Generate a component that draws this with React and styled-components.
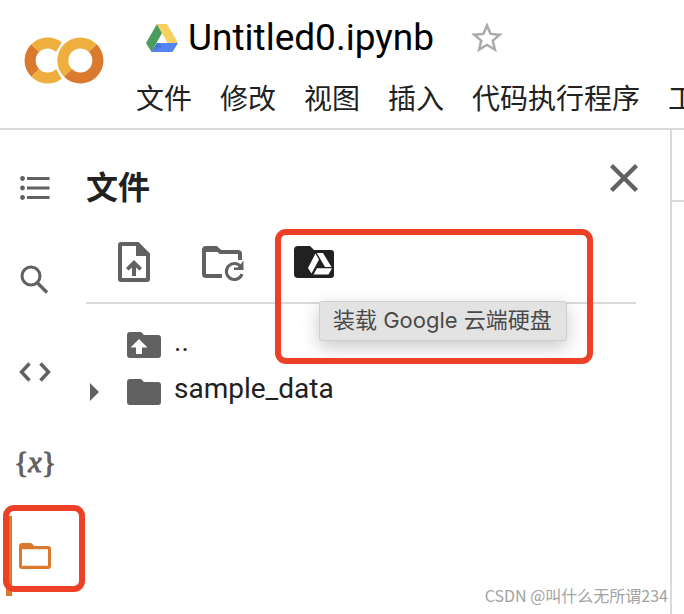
import styled, { createGlobalStyle } from "styled-components";

const colors = {
  text: "#212121",
  icon: "#616161",
  border: "#dadada",
  orange: "#d97a2f",
  yellow: "#eeaf3f",
  mark: "#ee4027",
};

const menuItems = ["文件", "修改", "视图", "插入", "代码执行程序", "工具"];

const ColabLogo = () => (
  <svg width="80" height="47" viewBox="0 5 24 14" aria-hidden="true">
    <path
      fill={colors.orange}
      d="M4.54 9.46 2.19 7.1a6.93 6.93 0 0 0 0 9.79l2.36-2.36a3.59 3.59 0 0 1-.01-5.07Z"
    />
    <path
      fill={colors.yellow}
      d="M2.19 7.1l2.35 2.36a3.59 3.59 0 0 1 5.08 0l1.71-2.93-.1-.08A6.93 6.93 0 0 0 2.19 7.1Z"
    />
    <path
      fill={colors.yellow}
      d="M11.34 17.46 9.62 14.54a3.59 3.59 0 0 1-5.08 0L2.19 16.9a6.93 6.93 0 0 0 9 .65l.15-.09Z"
    />
    <path
      fill={colors.yellow}
      d="M12 7.1a6.93 6.93 0 0 0 0 9.79l2.36-2.36a3.59 3.59 0 1 1 5.08-5.08L21.81 7.1A6.93 6.93 0 0 0 12 7.1Z"
    />
    <path
      fill={colors.orange}
      d="M21.81 7.1 19.46 9.46a3.59 3.59 0 0 1-5.08 5.08L12 16.9A6.93 6.93 0 0 0 21.81 7.1Z"
    />
  </svg>
);

const DriveLogo = () => (
  <svg width="32" height="28" viewBox="0 0 32 28" aria-hidden="true">
    <path fill="#4a9c5f" d="M11 0 16 9 5.5 28 0 19Z" />
    <path fill="#f7d060" d="M11 0h10l11 19H21.5Z" />
    <path fill="#5484ef" d="M11 19h21l-5.5 9h-21Z" />
    <path fill="#4a74d8" d="M11 19 5.5 28 16.5 22Z" />
  </svg>
);

const StarIcon = () => (
  <svg width="38" height="38" viewBox="0 0 24 24" fill="#ababab" aria-hidden="true">
    <path d="M22 9.24l-7.19-.62L12 2 9.19 8.63 2 9.24l5.46 4.73L5.82 21 12 17.27 18.18 21l-1.63-7.03L22 9.24zM12 15.4l-3.76 2.27 1-4.28-3.32-2.88 4.38-.38L12 6.1l1.71 4.04 4.38.38-3.32 2.88 1 4.28L12 15.4z" />
  </svg>
);

const TocIcon = () => (
  <svg width="40" height="40" viewBox="0 0 40 40" fill="currentColor" aria-hidden="true">
    <circle cx="7.5" cy="10.5" r="2.4" />
    <circle cx="7.5" cy="20" r="2.4" />
    <circle cx="7.5" cy="29.5" r="2.4" />
    <path d="M12 9h22.5v3H12zM12 18.5h22.5v3H12zM12 28h22.5v3H12z" />
  </svg>
);

const SearchIcon = () => (
  <svg
    width="40"
    height="40"
    viewBox="0 0 40 40"
    fill="none"
    stroke="currentColor"
    strokeWidth="3"
    aria-hidden="true"
  >
    <circle cx="16" cy="16" r="9" />
    <path d="M22.5 23 32 32.5" strokeWidth="3.4" />
  </svg>
);

const CodeIcon = () => (
  <svg
    width="40"
    height="40"
    viewBox="0 0 40 40"
    fill="none"
    stroke="currentColor"
    strokeWidth="3.4"
    aria-hidden="true"
  >
    <path d="M14.5 11.5 6.5 20l8 8.5M25.5 11.5l8 8.500-8 8.500" />
  </svg>
);

const FolderOutlineIcon = () => (
  <svg width="40" height="40" viewBox="0 0 40 40" fill="currentColor" aria-hidden="true">
    <path
      fillRule="evenodd"
      d="M6.5 7H16l3.5 3H33a3 3 0 0 1 3 3v17a3 3 0 0 1-3 3H7a3 3 0 0 1-3-3V10a3 3 0 0 1 2.5-3ZM7 13.2V29.8h26V13.2Z"
    />
  </svg>
);

const CloseIcon = () => (
  <svg
    width="48"
    height="48"
    viewBox="0 0 48 48"
    fill="none"
    stroke="currentColor"
    strokeWidth="4.4"
    aria-hidden="true"
  >
    <path d="M11.5 11.5 36.5 36.5M36.5 11.5 11.5 36.5" />
  </svg>
);

const UploadIcon = () => (
  <svg width="48" height="48" viewBox="0 0 48 48" fill="currentColor" aria-hidden="true">
    <path
      fillRule="evenodd"
      d="M11 4h17.5L40 15.5V41a3 3 0 0 1-3 3H11a3 3 0 0 1-3-3V7a3 3 0 0 1 3-3Zm1 4v32h24V18H26V8Z"
    />
    <path d="M24 22 32 30l-2.5 2.5L26 29.5V38h-4v-8.5l-3.5 3L16 30Z" />
  </svg>
);

const RefreshFolderIcon = () => (
  <svg width="48" height="48" viewBox="0 0 48 48" fill="none" stroke="currentColor" aria-hidden="true">
    <path d="M22 38H6a2 2 0 0 1-2-2V12a2 2 0 0 1 2-2h10l4.5 4H38a2 2 0 0 1 2 2v6" strokeWidth="4" />
    <path d="M5 9h11.5l5 5H4Z" fill="currentColor" stroke="none" />
    <path d="M41 29a8 8 0 1 0 1 7" strokeWidth="3" />
    <path d="M43.5 22.5V32H34v-2.5h3.500l3-3Z" fill="currentColor" stroke="none" />
  </svg>
);

const DriveFolderIcon = () => (
  <svg width="48" height="48" viewBox="0 0 48 48" aria-hidden="true">
    <path
      fill="currentColor"
      d="M8 8h12l4 4h17a3 3 0 0 1 3 3v22a3 3 0 0 1-3 3H8a4 4 0 0 1-4-4V12a4 4 0 0 1 4-4Z"
    />
    <path
      fill="#fff"
      d="M25.5 15.5 29 21.5 21.5 35.5 18 30ZM26.800 15h6.2L41.5 29h-6.500ZM27 30.200h15L38.500 36.500H23.500Z"
    />
  </svg>
);

const FolderIcon = ({ up }) => (
  <svg width="34" height="28" viewBox="0 0 34 28" aria-hidden="true">
    <path
      fill={colors.icon}
      d="M3 1h11l3 3h14a3 3 0 0 1 3 3v17a3 3 0 0 1-3 3H3a3 3 0 0 1-3-3V4a3 3 0 0 1 3-3Z"
    />
    {up && <path fill="#fff" d="M12 8l8.5 8.5H15V23H9v-6.5H3.5Z" />}
  </svg>
);

const Triangle = () => (
  <svg width="9" height="18" viewBox="0 0 9 18" fill={colors.icon} aria-hidden="true">
    <path d="M0 0 9 9 0 18Z" />
  </svg>
);

export default function App() {
  return (
    <>
      <GlobalStyle />
      <Page>
        <Header>
          <Logo href="#" aria-label="Colab">
            <ColabLogo />
          </Logo>
          <HeaderMain>
            <TitleRow>
              <DriveLogo />
              <Title>Untitled0.ipynb</Title>
              <IconButton aria-label="加星标">
                <StarIcon />
              </IconButton>
            </TitleRow>
            <Menu>
              {menuItems.map((item) => (
                <MenuButton key={item}>{item}</MenuButton>
              ))}
            </Menu>
          </HeaderMain>
        </Header>

        <Body>
          <Rail>
            <RailButton aria-label="目录">
              <TocIcon />
            </RailButton>
            <RailButton aria-label="查找和替换">
              <SearchIcon />
            </RailButton>
            <RailButton aria-label="代码段">
              <CodeIcon />
            </RailButton>
            <RailButton aria-label="变量">
              <Variable>
                {"{"}
                <i>x</i>
                {"}"}
              </Variable>
            </RailButton>
            <RailButton $active aria-label="文件">
              <FolderOutlineIcon />
              <RailMark />
            </RailButton>
          </Rail>

          <Panel>
            <PanelHeader>
              <PanelTitle>文件</PanelTitle>
              <IconButton aria-label="关闭">
                <CloseIcon />
              </IconButton>
            </PanelHeader>
            <Toolbar>
              <IconButton aria-label="上传">
                <UploadIcon />
              </IconButton>
              <IconButton aria-label="刷新">
                <RefreshFolderIcon />
              </IconButton>
              <Anchor>
                <IconButton $dark aria-labelledby="drive-tip">
                  <DriveFolderIcon />
                </IconButton>
                <Tooltip id="drive-tip" role="tooltip">
                  装载 Google 云端硬盘
                </Tooltip>
                <ToolbarMark />
              </Anchor>
            </Toolbar>
            <FileList>
              <FileRow>
                <Arrow />
                <FolderIcon up />
                <FileName>..</FileName>
              </FileRow>
              <FileRow>
                <Arrow>
                  <Triangle />
                </Arrow>
                <FolderIcon />
                <FileName>sample_data</FileName>
              </FileRow>
            </FileList>
            <Watermark>CSDN @叫什么无所谓234</Watermark>
          </Panel>

          <Notebook>
            <NotebookBar />
          </Notebook>
        </Body>
      </Page>
    </>
  );
}

const GlobalStyle = createGlobalStyle`
  * {
    box-sizing: border-box;
  }
  body {
    margin: 0;
    background: #fff;
    color: ${colors.text};
    font-family: Roboto, "Noto Sans CJK SC", sans-serif;
  }
  svg {
    display: block;
    flex: none;
  }
  button {
    padding: 0;
    border: 0;
    background: none;
    color: inherit;
    font: inherit;
    cursor: pointer;
  }
`;

const Page = styled.div`
  display: flex;
  flex-direction: column;
  min-height: 100vh;
  overflow: hidden;
`;

const Header = styled.header`
  display: flex;
  align-items: flex-start;
  gap: 32px;
  padding: 0 0 6px 24px;
  border-bottom: 2px solid ${colors.border};
`;

const Logo = styled.a`
  padding-top: 37px;
`;

const HeaderMain = styled.div`
  flex: 1;
  min-width: 0;
`;

const TitleRow = styled.div`
  display: flex;
  align-items: center;
  height: 76px;
  padding-left: 10px;
`;

const Title = styled.h1`
  margin: 0 34px 0 10px;
  color: #000;
  font-size: 37px;
  font-weight: 400;
  line-height: 44px;
`;

const Menu = styled.nav`
  display: flex;
  gap: 28px;
  padding-top: 2px;
  overflow: hidden;
`;

const MenuButton = styled.button`
  flex: none;
  && {
    font-size: 28px;
    line-height: 44px;
  }
`;

const IconButton = styled.button`
  display: flex;
  && {
    color: ${(p) => (p.$dark ? colors.text : colors.icon)};
  }
`;

const Body = styled.div`
  display: flex;
  flex: 1;
`;

const Rail = styled.nav`
  display: flex;
  flex-direction: column;
  gap: 12px;
  padding: 18px 0 18px 6px;
`;

const RailButton = styled.button`
  position: relative;
  display: flex;
  align-items: center;
  justify-content: center;
  width: 52px;
  height: 80px;
  && {
    border-left: 6px solid ${(p) => (p.$active ? colors.orange : "transparent")};
    color: ${(p) => (p.$active ? colors.orange : colors.icon)};
  }
`;

const Variable = styled.span`
  padding-bottom: 4px;
  font-family: "Liberation Serif", serif;
  font-size: 30px;
  line-height: 32px;
  -webkit-text-stroke: 1px currentColor;
`;

// red frames drawn over the interface
const Mark = styled.span`
  position: absolute;
  border: 6px solid ${colors.mark};
  border-radius: 11px;
  pointer-events: none;
`;

const RailMark = styled(Mark)`
  top: -11px;
  left: -9px;
  width: 82px;
  height: 87px;
`;

const ToolbarMark = styled(Mark)`
  top: -9px;
  left: -15px;
  width: 318px;
  height: 135px;
`;

const Panel = styled.section`
  display: flex;
  flex: 1;
  flex-direction: column;
  min-width: 0;
  padding-left: 28px;
  border-right: 2px solid ${colors.border};
`;

const PanelHeader = styled.div`
  display: flex;
  align-items: flex-start;
  justify-content: space-between;
  height: 80px;
  padding: 24px 22px 0 0;
`;

const PanelTitle = styled.h2`
  margin: 10px 0 0;
  font-size: 32px;
  font-weight: 700;
  line-height: 48px;
`;

const Toolbar = styled.div`
  display: flex;
  gap: 42px;
  margin-right: 34px;
  padding: 28px 0 16px 24px;
  border-bottom: 2px solid ${colors.border};
`;

const Anchor = styled.div`
  position: relative;
`;

const Tooltip = styled.span`
  position: absolute;
  top: 63px;
  left: 29px;
  padding: 0 14px 2px 13px;
  border: 1px solid #cfcfcf;
  border-radius: 3px;
  background: #e3e3e3;
  box-shadow: 0 6px 18px rgba(0, 0, 0, 0.22);
  color: #4a4a4a;
  font-family: Inter, "Noto Sans CJK SC", sans-serif;
  font-size: 22px;
  line-height: 36px;
  white-space: nowrap;
`;

const FileList = styled.ul`
  margin: 0;
  padding: 17px 0 0 4px;
  list-style: none;
`;

const FileRow = styled.li`
  display: flex;
  align-items: center;
  height: 47px;
`;

const Arrow = styled.span`
  width: 37px;
`;

const FileName = styled.span`
  padding: 0 0 6px 13px;
  font-size: 28px;
  line-height: 32px;
`;

const Watermark = styled.footer`
  margin: auto 2px 7px 0;
  color: #a3a3a3;
  font-family: "Noto Sans CJK SC", sans-serif;
  font-size: 16px;
  line-height: 24px;
  text-align: right;
`;

const Notebook = styled.main`
  width: 12px;
`;

const NotebookBar = styled.div`
  height: 72px;
  border-bottom: 2px solid ${colors.border};
`;
